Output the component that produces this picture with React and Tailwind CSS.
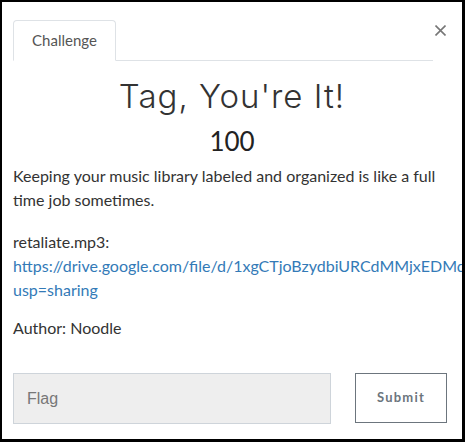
import React from 'react';

const App = () => {
  return (
    <div
      className="w-[465px] h-[442px] bg-white border-black border-l-2 border-t-2 border-r-[3px] border-b-[3px] overflow-hidden text-[#333]"
      style={{ fontFamily: 'Lato, "Open Sans", sans-serif' }}
    >
      {/* Header with tab */}
      <div className="flex items-start pl-[11px] pt-[18px]">
        <div className="w-[420px] flex border-b border-[#dee2e6]">
          <div className="w-[103px] h-[41px] -mb-px border border-[#dee2e6] border-b-white rounded-t-[4px] bg-white flex items-center justify-center text-[15px] text-[#555]">
            Challenge
          </div>
        </div>
        <button className="ml-[1px] mt-[2px] w-[12px] h-[16px] flex items-center justify-center text-[#777]">
          <svg width="11" height="11" viewBox="0 0 11 11" fill="none" stroke="currentColor" strokeWidth="1.6">
            <path d="M0.5 0.5 L10.5 10.5 M10.5 0.5 L0.5 10.5" />
          </svg>
        </button>
      </div>

      {/* Body */}
      <div className="px-[11px]">
        <h1
          className="text-center text-[33px] leading-[40px] mt-[15px] tracking-[1px] text-[#333]"
          style={{ fontFamily: 'Inter, Lato, sans-serif', fontWeight: 300 }}
        >
          Tag, You're It!
        </h1>
        <div className="text-center text-[26px] leading-[30px] mt-[10px] text-[#222]">100</div>

        <p className="text-[16px] leading-[24px] mt-[8px] text-[#333]">
          Keeping your music library labeled and organized is like a full time job sometimes.
        </p>

        <p className="text-[16px] leading-[24px] mt-[18px] text-[#333]">
          retaliate.mp3:
          <br />
          <a className="text-[#337ab7] whitespace-nowrap" href="#">
            https://drive.google.com/file/d/1xgCTjoBzydbiURCdMMjxEDMqKx3bQ/view?
          </a>
          <br />
          <a className="text-[#337ab7]" href="#">usp=sharing</a>
        </p>

        <p className="text-[16px] leading-[24px] mt-[14px] text-[#333]">Author: Noodle</p>

        <div className="flex items-start mt-[33px]">
          <input
            type="text"
            placeholder="Flag"
            className="w-[318px] h-[51px] bg-[#eeeeee] border border-[#ced4da] px-[13px] text-[16px] placeholder-[#777] outline-none"
            style={{ fontFamily: '"Liberation Sans", Arial, sans-serif' }}
          />
          <button className="ml-[24px] w-[92px] h-[50px] border border-[#6c757d] text-[#6c757d] text-[13px] font-bold tracking-[1.2px] bg-white">
            Submit
          </button>
        </div>
      </div>
    </div>
  );
};

export default App;
